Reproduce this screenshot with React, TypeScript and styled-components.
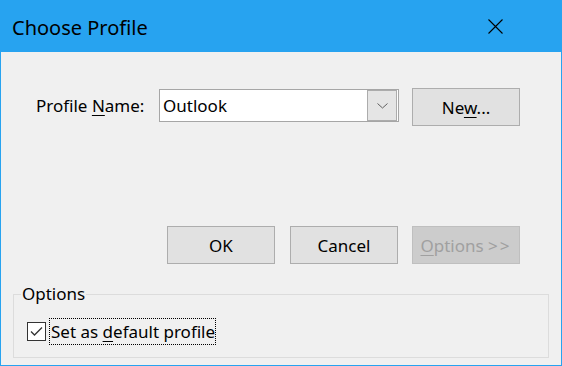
import React from 'react';
import styled, { createGlobalStyle } from 'styled-components';

const accent = '#27a3f0';

const GlobalStyle = createGlobalStyle`
  html, body {
    margin: 0;
    padding: 0;
    background: #f0f0f0;
  }
  * {
    box-sizing: border-box;
  }
`;

const Window = styled.div`
  width: 562px;
  height: 366px;
  display: flex;
  flex-direction: column;
  background: #f0f0f0;
  border: 1px solid ${accent};
  border-top: none;
  font-family: 'Noto Sans', 'Open Sans', sans-serif;
  font-size: 17px;
  color: #000;
`;

const TitleBar = styled.div`
  height: 52px;
  margin: 0 -1px;
  flex: none;
  display: flex;
  align-items: center;
  justify-content: space-between;
  padding: 0 59px 0 12px;
  background: ${accent};
`;

const Title = styled.div`
  font-size: 20px;
  color: #000;
  padding-top: 2px;
`;

const Close = styled.svg`
  display: block;
  width: 15px;
  height: 15px;
`;

const Body = styled.div`
  flex: 1;
  display: flex;
  flex-direction: column;
`;

const ProfileRow = styled.div`
  display: flex;
  align-items: flex-start;
  margin-top: 36px;
  padding-left: 35px;
  height: 38px;
`;

const Label = styled.label`
  width: 123px;
  height: 35px;
  display: flex;
  align-items: center;
`;

const Key = styled.span`
  text-decoration: underline;
  text-underline-offset: 3px;
  text-decoration-thickness: 1px;
`;

const Combo = styled.div`
  width: 240px;
  height: 33px;
  margin-top: 1px;
  display: flex;
  align-items: stretch;
  background: #fff;
  border: 1px solid #a6a6a6;
`;

const ComboText = styled.div`
  flex: 1;
  display: flex;
  align-items: center;
  padding-left: 3px;
`;

const ComboArrow = styled.div`
  width: 30px;
  margin-right: 1px;
  display: flex;
  align-items: center;
  justify-content: center;
  background: #e5e5e5;
  border: 1px solid #acacac;
`;

const Button = styled.button<{ disabled?: boolean }>`
  width: 108px;
  height: 38px;
  padding: 0;
  font: inherit;
  color: ${p => (p.disabled ? '#a0a0a0' : '#000')};
  background: ${p => (p.disabled ? '#cccccc' : '#e1e1e1')};
  border: 1px solid ${p => (p.disabled ? '#bfbfbf' : '#adadad')};
  border-radius: 0;
`;

const NewButton = styled(Button)`
  margin-left: 13px;
`;

const ButtonRow = styled.div`
  display: flex;
  justify-content: flex-end;
  gap: 14px;
  margin-top: 100px;
  padding-right: 41px;

  & > :first-child {
    margin-right: 1px;
  }
`;

const Arrows = styled.span`
  letter-spacing: 2px;
`;

const Group = styled.fieldset`
  margin: 18px 12px 0;
  padding: 12px 13px 12px 13px;
  border: 1px solid #dcdcdc;
  min-width: 0;
`;

const Legend = styled.legend`
  padding: 0 1px;
  margin-left: -6px;
  line-height: 24px;
`;

const CheckRow = styled.div`
  display: flex;
  align-items: center;
  gap: 3px;
`;

const Box = styled.div`
  width: 19px;
  height: 19px;
  display: flex;
  align-items: center;
  justify-content: center;
  background: #fff;
  border: 1px solid #333;
`;

const CheckLabel = styled.span`
  height: 27px;
  display: flex;
  align-items: center;
  padding: 0 1px 0 2px;
  outline: 1px dotted #000;
  outline-offset: -1px;
`;

export default function App() {
  return (
    <>
      <GlobalStyle />
      <Window>
        <TitleBar>
          <Title>Choose Profile</Title>
          <Close viewBox="0 0 15 15">
            <path d="M0.5 0.5 L14.5 14.5 M14.5 0.5 L0.5 14.5" stroke="#000" strokeWidth="1.1" fill="none" />
          </Close>
        </TitleBar>
        <Body>
          <ProfileRow>
            <Label>
              Profile&nbsp;<Key>N</Key>ame:
            </Label>
            <Combo>
              <ComboText>Outlook</ComboText>
              <ComboArrow>
                <svg width="11" height="6" viewBox="0 0 11 6">
                  <path d="M0.5 0.5 L5.5 5 L10.5 0.5" stroke="#606060" strokeWidth="1" fill="none" />
                </svg>
              </ComboArrow>
            </Combo>
            <NewButton>
              Ne<Key>w</Key>...
            </NewButton>
          </ProfileRow>
          <ButtonRow>
            <Button>OK</Button>
            <Button>Cancel</Button>
            <Button disabled>
              <Key>O</Key>ptions <Arrows>&gt;&gt;</Arrows>
            </Button>
          </ButtonRow>
          <Group>
            <Legend>Options</Legend>
            <CheckRow>
              <Box>
                <svg width="15" height="15" viewBox="0 0 15 15">
                  <path d="M2 7.5 L5.5 11 L13 3.5" stroke="#333" strokeWidth="1.3" fill="none" />
                </svg>
              </Box>
              <CheckLabel>
                Set as&nbsp;<Key>d</Key>efault profile
              </CheckLabel>
            </CheckRow>
          </Group>
        </Body>
      </Window>
    </>
  );
}
